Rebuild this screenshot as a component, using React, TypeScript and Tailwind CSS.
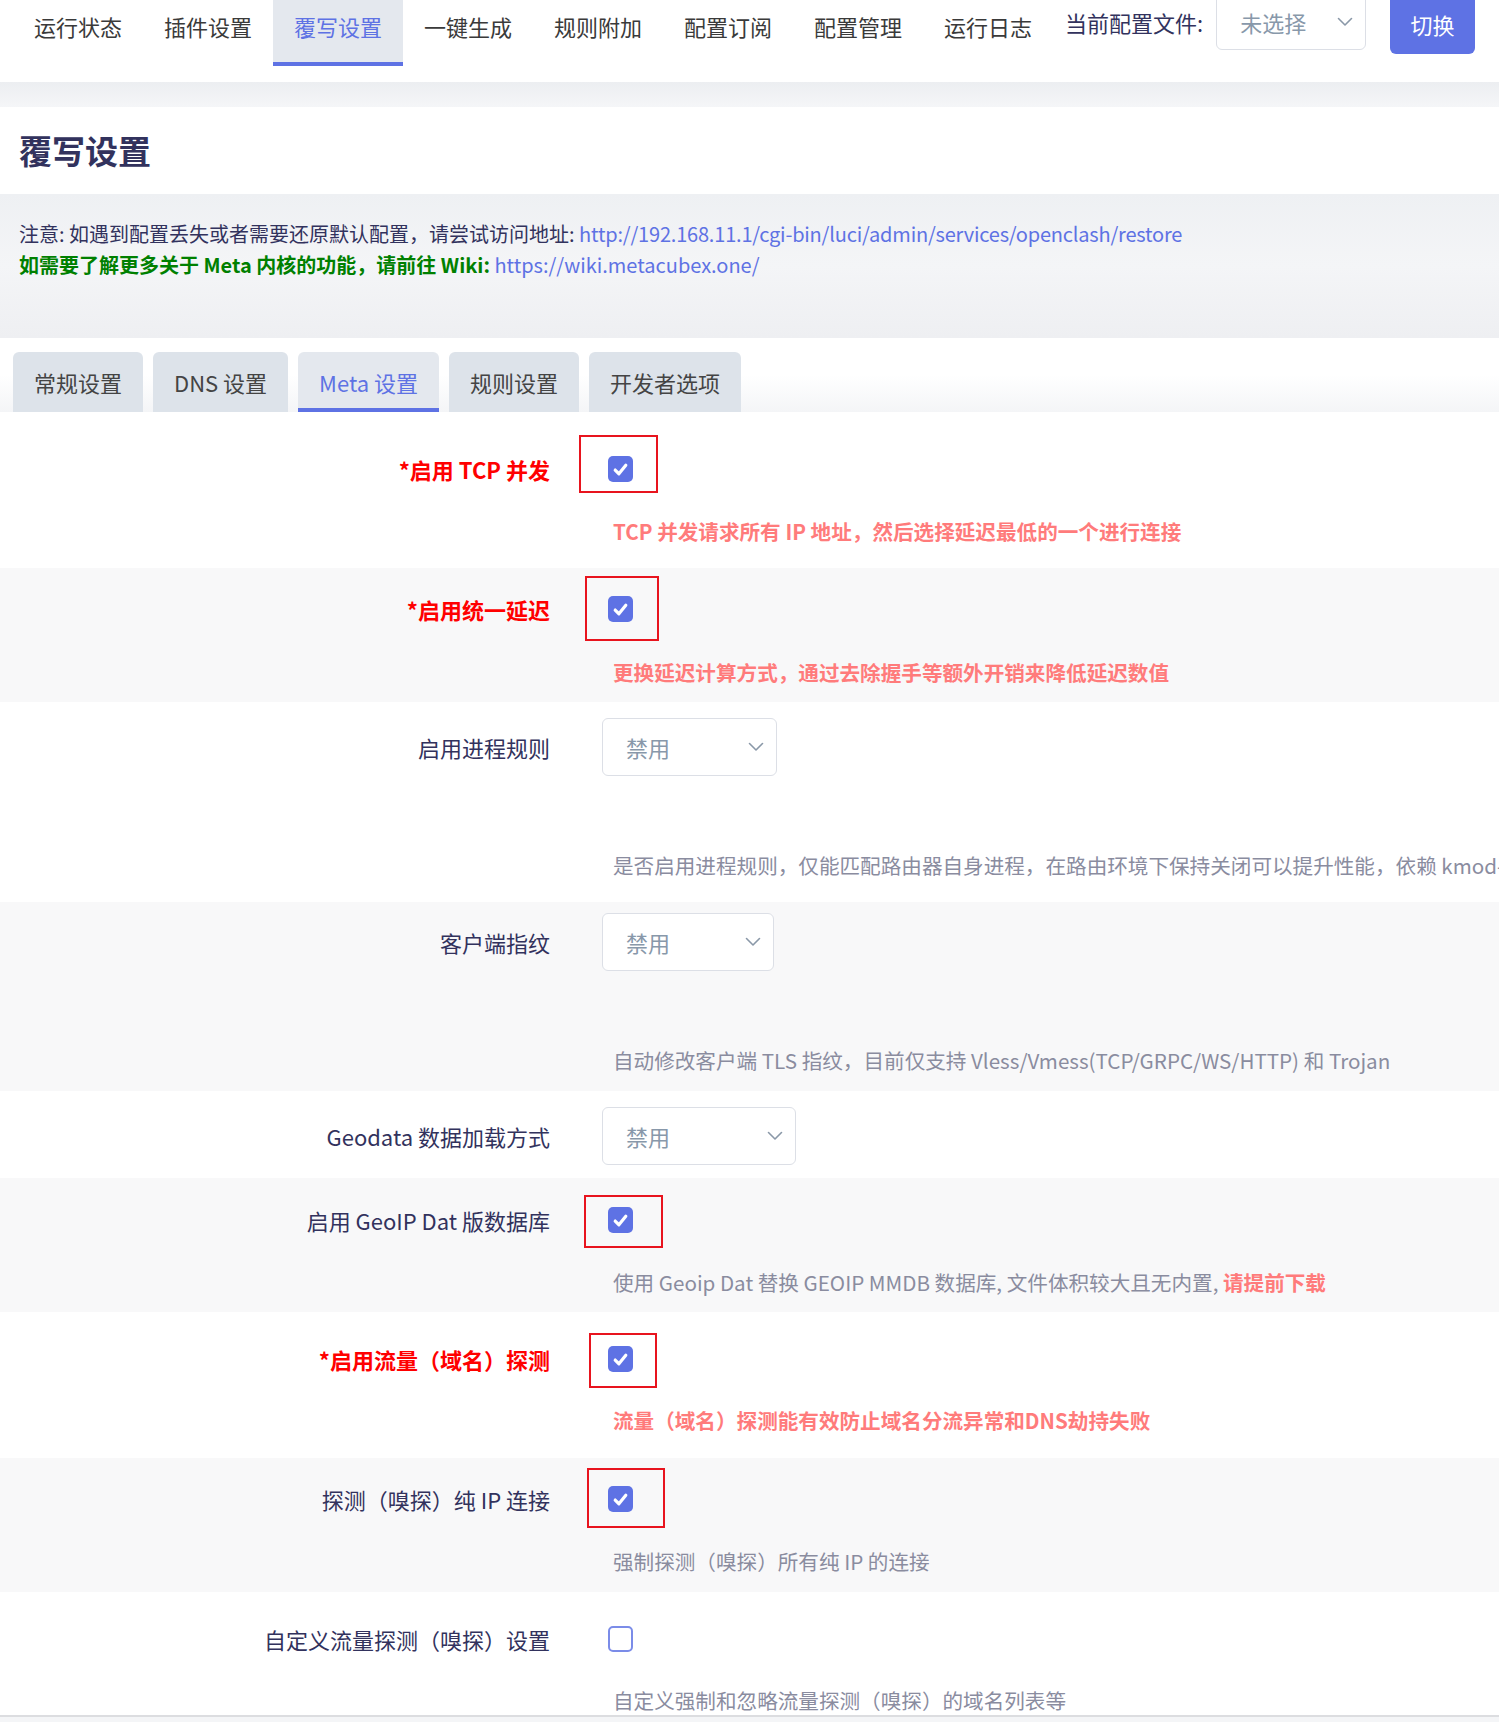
import type { ReactNode } from "react";

const FONT = "font-['Noto_Sans_CJK_SC','Noto_Sans',sans-serif]";

const NAV = ["运行状态", "插件设置", "覆写设置", "一键生成", "规则附加", "配置订阅", "配置管理", "运行日志"];
const TABS = ["常规设置", "DNS 设置", "Meta 设置", "规则设置", "开发者选项"];

function Chevron({ className }: { className: string }) {
  return (
    <svg className={className} viewBox="0 0 16 10" fill="none">
      <polyline points="1.5,1.5 8,8 14.5,1.5" stroke="#8a98a8" strokeWidth="1.6" strokeLinejoin="round" strokeLinecap="round" />
    </svg>
  );
}

function CheckBox({ checked = true }: { checked?: boolean }) {
  if (!checked) {
    return <div className="h-[26px] w-[25px] rounded-[5px] border-2 border-[#7b8ce8] bg-white" />;
  }
  return (
    <div className="flex h-[26px] w-[25px] items-center justify-center rounded-[5px] bg-[#5e72e4]">
      <svg viewBox="0 0 16 16" className="h-[17px] w-[17px]">
        <polyline points="3,8.5 6.5,12 13,4" fill="none" stroke="#fff" strokeWidth="3" strokeLinecap="round" strokeLinejoin="round" />
      </svg>
    </div>
  );
}

function Select({ w }: { w: string }) {
  return (
    <div className={`flex h-[58px] items-center justify-between rounded-[6px] border border-[#dcdfe6] bg-white pl-[23px] pr-[12px] ${w}`}>
      <span className="text-[22px] text-[#8898aa]">禁用</span>
      <Chevron className="h-[10px] w-[16px]" />
    </div>
  );
}

function Row({
  label,
  required,
  gray,
  pad,
  line,
  control,
  desc,
  descGap,
}: {
  label: string;
  required?: boolean;
  gray?: boolean;
  pad: string;
  line: string;
  control: ReactNode;
  desc?: ReactNode;
  descGap?: string;
}) {
  return (
    <div className={`${gray ? "bg-[#f8f8f9]" : "bg-white"} ${pad}`}>
      <div className={`flex items-center ${line}`}>
        <div
          className={`w-[550px] shrink-0 text-right text-[22px] leading-[26px] ${
            required ? "font-bold text-[#ff0000]" : "text-[#32325d]"
          }`}
        >
          {label}
        </div>
        <div className="ml-[52px]">{control}</div>
      </div>
      {desc ? (
        <div className={`ml-[613px] h-[28px] whitespace-nowrap text-[20.6px] leading-[28px] ${descGap}`}>{desc}</div>
      ) : null}
    </div>
  );
}

function Marked({ box, checked = true }: { box: string; checked?: boolean }) {
  return (
    <div className="relative ml-[6px]">
      <CheckBox checked={checked} />
      <div className={`pointer-events-none absolute border-2 border-[#e8141e] ${box}`} />
    </div>
  );
}

export default function App() {
  return (
    <div className={`min-h-[1722px] w-full overflow-hidden bg-[#f4f5f7] ${FONT}`}>
      {/* top nav */}
      <div className="flex h-[82px] items-start bg-white pl-[13px]">
        {NAV.map((n) => (
          <div
            key={n}
            className={`flex h-[66px] w-[130px] shrink-0 justify-center pt-[11px] text-[22px] leading-[30px] ${
              n === "覆写设置" ? "border-b-4 border-[#5e72e4] bg-[#e4e8ee] text-[#5e72e4]" : "text-[#3a3a3a]"
            }`}
          >
            {n}
          </div>
        ))}
        <div className="ml-[12px] pt-[7px] text-[22px] leading-[30px] whitespace-nowrap text-[#32325d]">当前配置文件:</div>
        <div className="-mt-[6px] ml-[13px] flex h-[56px] w-[150px] shrink-0 items-center justify-between rounded-[6px] border border-[#dcdfe6] bg-white pl-[23px] pr-[12px]">
          <span className="text-[22px] text-[#8898aa]">未选择</span>
          <Chevron className="h-[10px] w-[16px]" />
        </div>
        <div className="-mt-[6px] ml-[24px] flex h-[60px] w-[85px] shrink-0 items-center justify-center rounded-[6px] bg-[#5e72e4] text-[22px] text-white">
          切换
        </div>
      </div>
      <div className="h-[25px] bg-gradient-to-b from-[#eceef1] to-[#f5f6f8]" />

      {/* header */}
      <div className="flex h-[87px] items-center bg-white pl-[19px]">
        <h1 className="text-[33px] font-bold text-[#32325d]">覆写设置</h1>
      </div>

      {/* notice */}
      <div className="h-[144px] bg-gradient-to-b from-[#eef0f3] via-[#f4f5f7] to-[#eeeff2] pl-[19px] pt-[24px] text-[20px] leading-[31px]">
        <div className="whitespace-nowrap text-[#32325d]">
          注意: 如遇到配置丢失或者需要还原默认配置，请尝试访问地址:{" "}
          <span className="tracking-[-0.2px] text-[#5e72e4]">http://192.168.11.1/cgi-bin/luci/admin/services/openclash/restore</span>
        </div>
        <div className="whitespace-nowrap">
          <span className="font-bold text-[#008000]">如需要了解更多关于 Meta 内核的功能，请前往 Wiki: </span>
          <span className="text-[#5e72e4]">https://wiki.metacubex.one/</span>
        </div>
      </div>

      {/* tabs */}
      <div className="flex gap-[10px] bg-gradient-to-b from-white via-white to-[#f4f5f7] pl-[13px] pt-[14px]">
        {TABS.map((t) => (
          <div
            key={t}
            className={`flex h-[60px] items-center rounded-t-[6px] px-[21px] text-[22px] ${
              t === "Meta 设置"
                ? "border-b-4 border-[#5e72e4] bg-[#e4e8ee] pt-[4px] text-[#5e72e4]"
                : "bg-[#dde3ea] text-[#444]"
            }`}
          >
            {t}
          </div>
        ))}
      </div>

      {/* rows */}
      <Row
        label="*启用 TCP 并发"
        required
        pad="pt-[44px] pb-[23px]"
        line="h-[26px]"
        control={<Marked box="left-[-29px] top-[-21px] h-[58px] w-[79px]" />}
        descGap="mt-[35px]"
        desc={<span className="font-bold text-[#ff7b7b]">TCP 并发请求所有 IP 地址，然后选择延迟最低的一个进行连接</span>}
      />
      <Row
        label="*启用统一延迟"
        required
        gray
        pad="pt-[28px] pb-[16px]"
        line="h-[26px]"
        control={<Marked box="left-[-23px] top-[-20px] h-[65px] w-[74px]" />}
        descGap="mt-[36px]"
        desc={<span className="font-bold text-[#ff7b7b]">更换延迟计算方式，通过去除握手等额外开销来降低延迟数值</span>}
      />
      <Row
        label="启用进程规则"
        pad="pt-[16px] pb-[23px]"
        line="h-[58px]"
        control={<Select w="w-[175px]" />}
        descGap="mt-[75px]"
        desc={
          <span className="text-[#8a8c9f]">
            是否启用进程规则，仅能匹配路由器自身进程，在路由环境下保持关闭可以提升性能，依赖 kmod-inet-diag 内核模块
          </span>
        }
      />
      <Row
        label="客户端指纹"
        gray
        pad="pt-[11px] pb-[17px]"
        line="h-[58px]"
        control={<Select w="w-[172px]" />}
        descGap="mt-[75px]"
        desc={<span className="text-[#8a8c9f]">自动修改客户端 TLS 指纹，目前仅支持 Vless/Vmess(TCP/GRPC/WS/HTTP) 和 Trojan</span>}
      />
      <Row label="Geodata 数据加载方式" pad="pt-[16px] pb-[13px]" line="h-[58px]" control={<Select w="w-[194px]" />} />
      <Row
        label="启用 GeoIP Dat 版数据库"
        gray
        pad="pt-[29px] pb-[16px]"
        line="h-[26px]"
        control={<Marked box="left-[-24px] top-[-12px] h-[53px] w-[79px]" />}
        descGap="mt-[35px]"
        desc={
          <span className="text-[#8a8c9f]">
            使用 Geoip Dat 替换 GEOIP MMDB 数据库, 文件体积较大且无内置,{" "}
            <span className="font-bold text-[#ff7b7b]">请提前下载</span>
          </span>
        }
      />
      <Row
        label="*启用流量（域名）探测"
        required
        pad="pt-[34px] pb-[24px]"
        line="h-[26px]"
        control={<Marked box="left-[-19px] top-[-13px] h-[55px] w-[68px]" />}
        descGap="mt-[34px]"
        desc={<span className="font-bold text-[#ff7b7b]">流量（域名）探测能有效防止域名分流异常和DNS劫持失败</span>}
      />
      <Row
        label="探测（嗅探）纯 IP 连接"
        gray
        pad="pt-[28px] pb-[17px]"
        line="h-[26px]"
        control={<Marked box="left-[-21px] top-[-18px] h-[60px] w-[78px]" />}
        descGap="mt-[35px]"
        desc={<span className="text-[#8a8c9f]">强制探测（嗅探）所有纯 IP 的连接</span>}
      />
      <Row
        label="自定义流量探测（嗅探）设置"
        pad="pt-[34px] pb-[1px]"
        line="h-[26px]"
        control={
          <div className="ml-[6px]">
            <CheckBox checked={false} />
          </div>
        }
        descGap="mt-[34px]"
        desc={<span className="text-[#8a8c9f]">自定义强制和忽略流量探测（嗅探）的域名列表等</span>}
      />
      <div className="h-[2px] bg-[#dcdde0]" />
    </div>
  );
}
